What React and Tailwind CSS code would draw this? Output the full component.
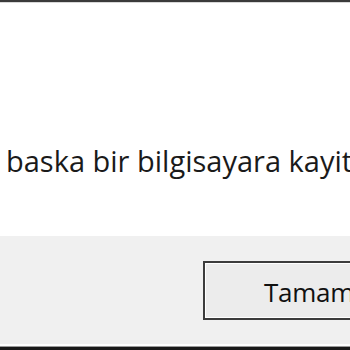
export default function App() {
  return (
    <div
      className="w-[350px] h-[350px] overflow-hidden flex flex-col bg-white"
      style={{ fontFamily: '"Open Sans", "Noto Sans", sans-serif' }}
    >
      {/* window top edge */}
      <div className="h-[2px] bg-[#3a3a3a] shrink-0" />
      <div className="h-[1px] bg-[#d8d8d8] shrink-0" />

      {/* message area */}
      <div className="h-[233px] shrink-0 bg-white pt-[138px] pl-[6px]">
        <p className="text-[29px] font-medium leading-[40px] text-[#1a1a1a] whitespace-nowrap">
          baska bir bilgisayara kayit
        </p>
      </div>

      {/* button strip */}
      <div className="flex-1 bg-[#f0f0f0] pt-[25px] pl-[203px]">
        <div className="w-[200px] h-[59px] border-2 border-[#3c3c3c] bg-[#f2f2f2]">
          <div className="h-full border border-white bg-[#ececec] flex items-center pl-[58px]">
            <span className="text-[26px] font-medium leading-none tracking-[-0.01em] text-[#111] pt-[2px]">
              Tamam
            </span>
          </div>
        </div>
      </div>

      {/* window bottom edge */}
      <div className="h-[2px] bg-white shrink-0" />
      <div className="h-[1px] bg-[#9a9a9a] shrink-0" />
      <div className="h-[3px] bg-[#1a1a1a] shrink-0" />
    </div>
  )
}
